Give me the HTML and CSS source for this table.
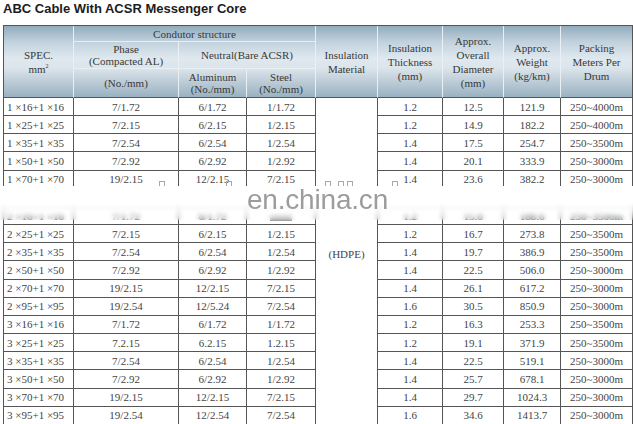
FILE: index.html
```html
<!DOCTYPE html>
<html>
<head>
<meta charset="utf-8">
<link rel="stylesheet" href="styles.css">
</head>
<body>
<div class="page">
  <h1 class="title">ABC Cable With ACSR Messenger Core</h1>
  <div class="table-wrap">
    <table class="spec">
      <colgroup>
        <col class="w-spec"><col class="w-phase"><col class="w-al"><col class="w-st"><col class="w-mat"><col class="w-thk"><col class="w-dia"><col class="w-wt"><col class="w-pack">
      </colgroup>
      <thead>
        <tr class="h1">
          <th rowspan="3" class="hb tall">SPEC.<br>mm<sup>2</sup></th>
          <th colspan="3">Condutor structure</th>
          <th rowspan="3" class="hb tall">Insulation<br>Material</th>
          <th rowspan="3" class="hb tall">Insulation<br>Thickness<br>(mm)</th>
          <th rowspan="3" class="hb tall dia">Approx.<br>Overall<br>Diameter<br>(mm)</th>
          <th rowspan="3" class="hb tall">Approx.<br>Weight<br>(kg/km)</th>
          <th rowspan="3" class="hb tall last">Packing<br>Meters Per<br>Drum</th>
        </tr>
        <tr class="h2">
          <th>Phase<br>(Compacted AL)</th>
          <th colspan="2">Neutral(Bare ACSR)</th>
        </tr>
        <tr class="h3">
          <th class="hb">(No./mm)</th>
          <th class="hb">Aluminum<br>(No./mm)</th>
          <th class="hb">Steel<br>(No./mm)</th>
        </tr>
      </thead>
      <tbody>
        <tr><td class="sp">1 ×16+1 ×16</td><td>7/1.72</td><td>6/1.72</td><td>1/1.72</td><td rowspan="18" class="mat">(HDPE)</td><td>1.2</td><td>12.5</td><td>121.9</td><td>250~4000m</td></tr>
        <tr><td class="sp">1 ×25+1 ×25</td><td>7/2.15</td><td>6/2.15</td><td>1/2.15</td><td>1.2</td><td>14.9</td><td>182.2</td><td>250~4000m</td></tr>
        <tr><td class="sp">1 ×35+1 ×35</td><td>7/2.54</td><td>6/2.54</td><td>1/2.54</td><td>1.4</td><td>17.5</td><td>254.7</td><td>250~3500m</td></tr>
        <tr><td class="sp">1 ×50+1 ×50</td><td>7/2.92</td><td>6/2.92</td><td>1/2.92</td><td>1.4</td><td>20.1</td><td>333.9</td><td>250~3000m</td></tr>
        <tr><td class="sp">1 ×70+1 ×70</td><td>19/2.15</td><td>12/2.15</td><td>7/2.15</td><td>1.4</td><td>23.6</td><td>382.2</td><td>250~3000m</td></tr>
        <tr class="hidden-row"><td class="sp"></td><td></td><td></td><td></td><td></td><td></td><td></td><td></td></tr>
        <tr><td class="sp">2 ×16+1 ×16</td><td>7/1.72</td><td>6/1.72</td><td><span class="blob"></span></td><td>1.2</td><td>15.0</td><td>188.6</td><td>250~3500m</td></tr>
        <tr><td class="sp">2 ×25+1 ×25</td><td>7/2.15</td><td>6/2.15</td><td>1/2.15</td><td>1.2</td><td>16.7</td><td>273.8</td><td>250~3500m</td></tr>
        <tr><td class="sp">2 ×35+1 ×35</td><td>7/2.54</td><td>6/2.54</td><td>1/2.54</td><td>1.4</td><td>19.7</td><td>386.9</td><td>250~3500m</td></tr>
        <tr><td class="sp">2 ×50+1 ×50</td><td>7/2.92</td><td>6/2.92</td><td>1/2.92</td><td>1.4</td><td>22.5</td><td>506.0</td><td>250~3000m</td></tr>
        <tr><td class="sp">2 ×70+1 ×70</td><td>19/2.15</td><td>12/2.15</td><td>7/2.15</td><td>1.4</td><td>26.1</td><td>617.2</td><td>250~3000m</td></tr>
        <tr><td class="sp">2 ×95+1 ×95</td><td>19/2.54</td><td>12/5.24</td><td>7/2.54</td><td>1.6</td><td>30.5</td><td>850.9</td><td>250~3000m</td></tr>
        <tr><td class="sp">3 ×16+1 ×16</td><td>7/1.72</td><td>6/1.72</td><td>1/1.72</td><td>1.2</td><td>16.3</td><td>253.3</td><td>250~3500m</td></tr>
        <tr><td class="sp">3 ×25+1 ×25</td><td>7.2.15</td><td>6.2.15</td><td>1.2.15</td><td>1.2</td><td>19.1</td><td>371.9</td><td>250~3500m</td></tr>
        <tr><td class="sp">3 ×35+1 ×35</td><td>7/2.54</td><td>6/2.54</td><td>1/2.54</td><td>1.4</td><td>22.5</td><td>519.1</td><td>250~3000m</td></tr>
        <tr><td class="sp">3 ×50+1 ×50</td><td>7/2.92</td><td>6/2.92</td><td>1/2.92</td><td>1.4</td><td>25.7</td><td>678.1</td><td>250~3000m</td></tr>
        <tr><td class="sp">3 ×70+1 ×70</td><td>19/2.15</td><td>12/2.15</td><td>7/2.15</td><td>1.4</td><td>29.7</td><td>1024.3</td><td>250~3000m</td></tr>
        <tr><td class="sp">3 ×95+1 ×95</td><td>19/2.54</td><td>12/2.54</td><td>7/2.54</td><td>1.6</td><td>34.6</td><td>1413.7</td><td>250~3000m</td></tr>
      </tbody>
    </table>
  </div>
  <div class="wm-glyphs">
    <span class="tofu g1"></span><span class="tofu g2"></span><span class="tofu g3"></span><span class="tofu g4"></span><span class="tofu g5"></span><span class="tofu g6"></span>
  </div>
  <div class="wm"><span class="wm-text">en.china.cn</span></div>
</div>
</body>
</html>
```

FILE: styles.css
```css
html, body {
  margin: 0;
  padding: 0;
  background: #fff;
}

.page {
  position: relative;
  width: 633px;
  height: 424px;
  overflow: hidden;
}

.title {
  margin: 0 0 8px 0;
  padding: 1px 0 0 3px;
  height: 16px;
  font: bold 13px/16px "Liberation Sans", Arial, sans-serif;
  color: #1c1c1c;
}

.table-wrap {
  padding-left: 3px;
}

.spec {
  border-collapse: separate;
  border-spacing: 0;
  table-layout: fixed;
  width: 630px;
  border-top: 1px solid #555;
  border-left: 1px solid #555;
  font-family: "Liberation Serif", "Times New Roman", serif;
  font-size: 11px;
  color: #444;
}

.w-spec { width: 70px; }
.w-phase { width: 105px; }
.w-al { width: 68px; }
.w-st { width: 69px; }
.w-mat { width: 62px; }
.w-thk { width: 65px; }
.w-dia { width: 61px; }
.w-wt { width: 57px; }
.w-pack { width: 72px; }

.spec th,
.spec td {
  padding: 0;
  text-align: center;
  vertical-align: middle;
  border-right: 1px solid #555;
  border-bottom: 1px solid #555;
  white-space: nowrap;
}

.spec thead {
  background: linear-gradient(to bottom, #92abbd 0%, #c1d2dd 22%, #dfe8ee 45%, #dce5eb 58%, #b8c9d5 80%, #98b0c0 100%);
}

.spec thead th {
  font-weight: normal;
  line-height: 12px;
  color: #383838;
  border-right-color: #e9eff3;
  border-bottom-color: #e9eff3;
}

.spec thead th.tall {
  line-height: 14px;
}

.spec thead th.hb {
  border-bottom-color: #555;
}

.spec thead th.last {
  border-right-color: #555;
}

.spec sup {
  font-size: 6px;
  line-height: 0;
  vertical-align: 5px;
}

.spec tr.h1 { height: 16px; }
.spec tr.h2 { height: 27px; }
.spec tr.h3 { height: 29px; }

.spec tbody tr { height: 18.17px; }

.spec tbody td {
  line-height: 12px;
}

.spec td.sp {
  text-align: left;
  padding-left: 3px;
}

.spec td.mat {
  padding-bottom: 14px;
}

.blob {
  display: inline-block;
  width: 22px;
  height: 9px;
  margin-top: 3px;
  background: linear-gradient(to bottom, rgba(60,60,60,0) 0%, rgba(60,60,60,0.5) 100%);
}

.wm {
  position: absolute;
  left: 0;
  top: 186px;
  width: 633px;
  height: 34px;
  padding-left: 247px;
  box-sizing: border-box;
  background: linear-gradient(to bottom, #fff 0%, #fff 50%, rgba(255,255,255,0.75) 72%, rgba(255,255,255,0.2) 92%, rgba(255,255,255,0) 100%);
  backdrop-filter: blur(2px);
}

.wm-text {
  display: block;
  font: 28px/28px "Liberation Sans", Arial, sans-serif;
  color: #9c9c9c;
  letter-spacing: -0.2px;
}

.wm-glyphs {
  position: absolute;
  left: 0;
  top: 181px;
  width: 633px;
  height: 8px;
}

.tofu {
  position: absolute;
  top: 0;
  width: 4px;
  height: 6px;
  border: 1px solid #a8a8a8;
}

.g1 { left: 159px; }
.g2 { left: 226px; }
.g3 { left: 325px; }
.g4 { left: 338px; }
.g5 { left: 347px; }
.g6 { left: 392px; }
```
